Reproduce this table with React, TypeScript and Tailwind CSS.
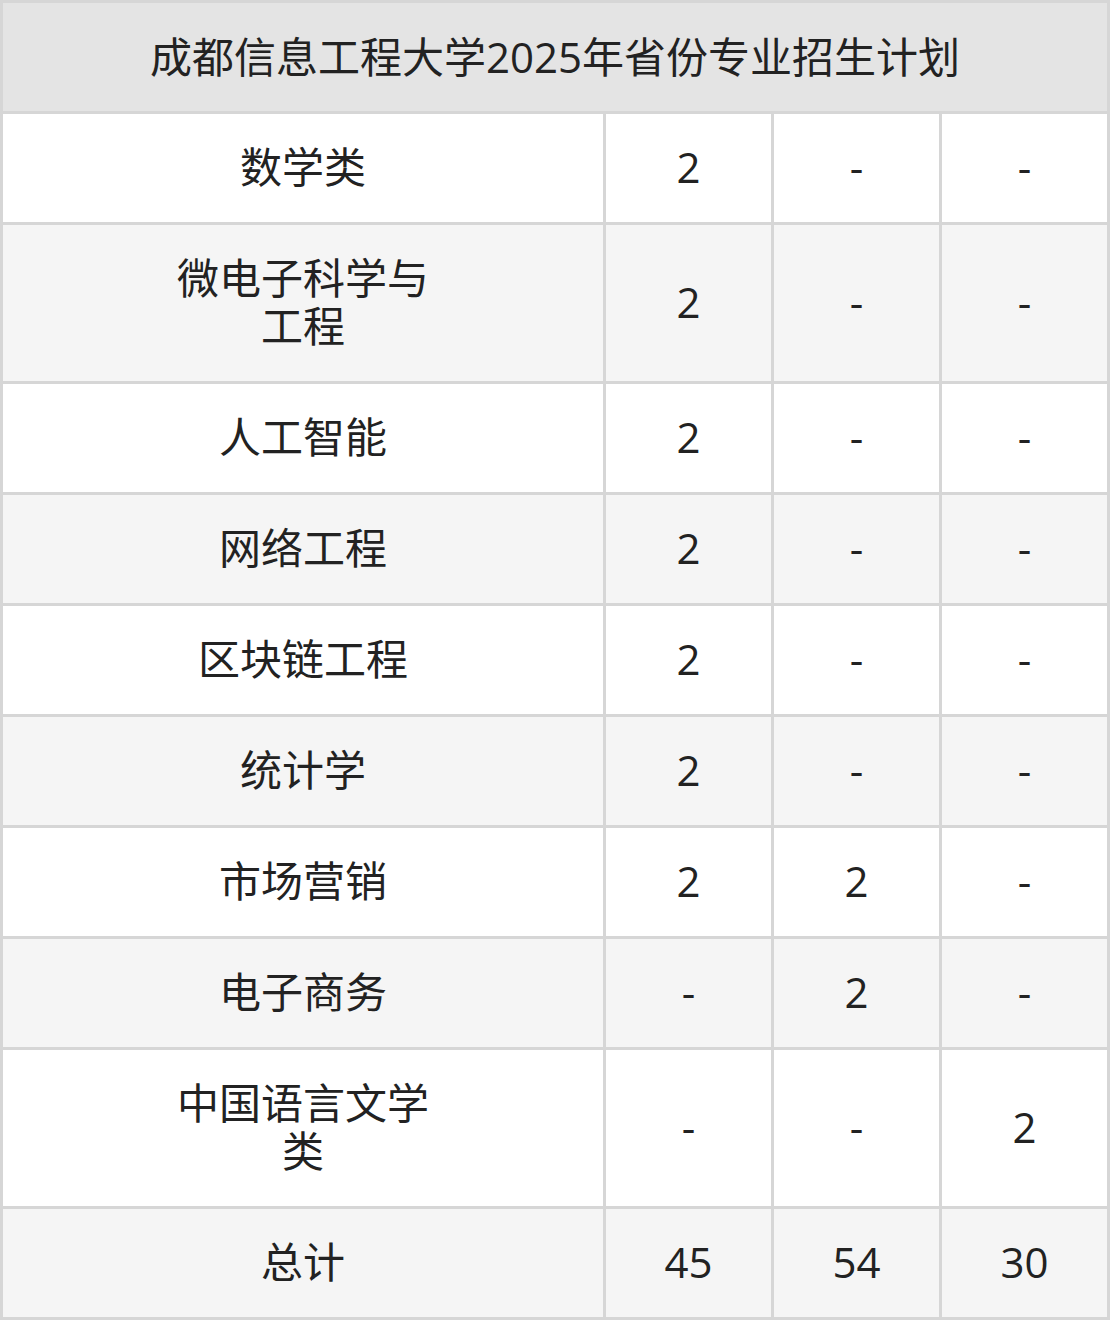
const rows: [string, string, string, string][] = [
  ['数学类', '2', '-', '-'],
  ['微电子科学与工程', '2', '-', '-'],
  ['人工智能', '2', '-', '-'],
  ['网络工程', '2', '-', '-'],
  ['区块链工程', '2', '-', '-'],
  ['统计学', '2', '-', '-'],
  ['市场营销', '2', '2', '-'],
  ['电子商务', '-', '2', '-'],
  ['中国语言文学类', '-', '-', '2'],
  ['总计', '45', '54', '30'],
]

const App = () => {
  return (
    <div
      className="w-[1110px] bg-[#d6d6d6] p-[3px] text-[42px] leading-[48px] text-[#222]"
      style={{ fontFamily: '"Open Sans", "Noto Sans CJK SC", sans-serif' }}
    >
      <div className="grid grid-cols-[600px_165px_165px_165px] gap-[3px]">
        <div className="col-span-4 flex h-[108px] items-center justify-center bg-[#e4e4e4] pb-[1px]">
          成都信息工程大学2025年省份专业招生计划
        </div>
        {rows.map((r, i) => {
          const bg = i % 2 === 0 ? 'bg-white' : 'bg-[#f5f5f5]'
          return [
            <div key={i + 'a'} className={`flex items-center justify-center pt-[29px] pb-[31px] ${bg}`}>
              <div className="w-[260px] text-center">{r[0]}</div>
            </div>,
            <div key={i + 'b'} className={`flex items-center justify-center pb-[2px] ${bg}`}>{r[1]}</div>,
            <div key={i + 'c'} className={`flex items-center justify-center pb-[2px] ${bg}`}>{r[2]}</div>,
            <div key={i + 'd'} className={`flex items-center justify-center pb-[2px] ${bg}`}>{r[3]}</div>,
          ]
        })}
      </div>
    </div>
  )
}

export default App
